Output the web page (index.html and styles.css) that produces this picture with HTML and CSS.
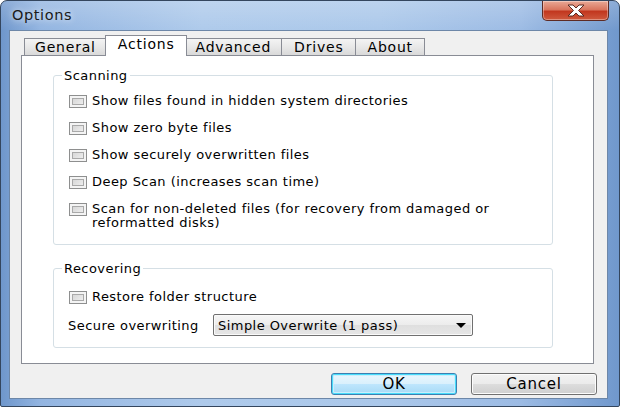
FILE: index.html
```html
<!DOCTYPE html>
<html>
<head>
<meta charset="utf-8">
<link rel="stylesheet" href="styles.css">
</head>
<body>
<div class="window">
  <div class="titlebar">
    <span class="title">Options</span>
    <div class="close">
      <svg width="24" height="13" viewBox="0 0 24 13">
        <path d="M4 1 L9 1 L12 4 L15 1 L20 1 L14.5 6.5 L20 12 L15 12 L12 9 L9 12 L4 12 L9.5 6.5 Z" fill="#fff" stroke="#5a2a22" stroke-width="1" stroke-linejoin="round"/>
      </svg>
    </div>
  </div>
  <div class="client">
    <div class="tabs">
      <div class="tab">General</div>
      <div class="tab tab-active">Actions</div>
      <div class="tab">Advanced</div>
      <div class="tab tab-wide">Drives</div>
      <div class="tab tab-wide">About</div>
    </div>
    <div class="panel">
      <fieldset class="group group-scan">
        <legend>Scanning</legend>
        <div class="group-body">
          <div class="row"><span class="check"></span><span class="label">Show files found in hidden system directories</span></div>
          <div class="row"><span class="check"></span><span class="label">Show zero byte files</span></div>
          <div class="row"><span class="check"></span><span class="label">Show securely overwritten files</span></div>
          <div class="row"><span class="check"></span><span class="label">Deep Scan (increases scan time)</span></div>
          <div class="row"><span class="check"></span><span class="label">Scan for non-deleted files (for recovery from damaged or<br>reformatted disks)</span></div>
        </div>
      </fieldset>
      <fieldset class="group group-recover">
        <legend>Recovering</legend>
        <div class="group-body">
          <div class="row"><span class="check"></span><span class="label">Restore folder structure</span></div>
          <div class="field">
            <span class="field-label">Secure overwriting</span>
            <div class="select">
              <span>Simple Overwrite (1 pass)</span>
              <span class="arrow"></span>
            </div>
          </div>
        </div>
      </fieldset>
    </div>
    <div class="buttons">
      <div class="btn btn-default">OK</div>
      <div class="btn">Cancel</div>
    </div>
  </div>
</div>
</body>
</html>
```
FILE: styles.css
```css
html, body {
  margin: 0;
  padding: 0;
  background: #ffffff;
}
body {
  font-family: "DejaVu Sans", Verdana, sans-serif;
  font-size: 13px;
  letter-spacing: 0.45px;
  color: #000;
}
.window {
  width: 620px;
  height: 407px;
  box-sizing: border-box;
  border: 1px solid #34465e;
  border-radius: 7px 7px 2px 2px;
  background:
    linear-gradient(180deg, rgba(255,255,255,0.2) 0px, rgba(255,255,255,0) 30px),
    linear-gradient(90deg, #6f97cc 0px, #93b5e1 40px, #aecaeb 200px, #abc8ea 380px, #9cbbe4 520px, #6f97cc 620px);
  padding: 0 11px 7px 8px;
  display: flex;
  flex-direction: column;
}
.titlebar {
  height: 29px;
  display: flex;
  align-items: flex-start;
  justify-content: space-between;
}
.title {
  font-size: 14.5px;
  letter-spacing: 0.6px;
  color: #1a1a1a;
  margin: 6px 0 0 3px;
  text-shadow: 0 0 6px rgba(255,255,255,0.9);
}
.close {
  width: 67px;
  height: 20px;
  margin-right: -1px;
  box-sizing: border-box;
  border: 1px solid #5e2b24;
  border-top: none;
  border-radius: 0 0 5px 5px;
  background: linear-gradient(180deg, #e9a996 0%, #d9765f 45%, #c2371f 55%, #cf5a3e 100%);
  box-shadow: inset 0 0 0 1px rgba(255,255,255,0.35);
  display: flex;
  align-items: center;
  justify-content: center;
}
.client {
  flex: 1;
  border: 1px solid #6d87a8;
  background: #f0f0f0;
  display: flex;
  flex-direction: column;
}
.tabs {
  display: flex;
  align-items: flex-end;
  padding: 4px 0 0 14px;
  height: 20px;
}
.tab {
  height: 17px;
  box-sizing: border-box;
  border: 1px solid #898c95;
  border-bottom: none;
  margin-right: -1px;
  padding: 0 10px;
  background: linear-gradient(180deg, #f4f4f4 0%, #e8e8e8 50%, #d9d9d9 100%);
  display: flex;
  align-items: center;
  font-size: 14px;
  letter-spacing: 0.8px;
  line-height: 15px;
}
.tab:first-child {
  padding: 0 11px 0 10px;
}
.tab-wide {
  padding: 0 11px 0 12px;
}
.tab-active {
  height: 21px;
  margin: 0 -2px -1px -2px;
  padding: 0 11px 3px 12px;
  background: #ffffff;
  position: relative;
  z-index: 1;
}
.panel {
  height: 309px;
  box-sizing: border-box;
  margin: 0 13px 0 11px;
  border: 1px solid #898c95;
  background: #ffffff;
  padding: 12px 40px 0 31px;
}
.group {
  margin: 0;
  padding: 0;
  border: 1px solid #d5dfe5;
  border-radius: 3px;
  min-width: 0;
}
.group legend {
  margin-left: 8px;
  padding: 0 2px;
  line-height: 15px;
}
.group-body {
  padding: 11px 10px 0 15px;
}
.group-scan .group-body {
  padding-bottom: 14px;
}
.group-recover {
  margin-top: 16px;
}
.group-recover .group-body {
  padding-top: 14px;
  padding-bottom: 11px;
}
.row {
  display: flex;
  align-items: flex-start;
  line-height: 14px;
}
.row + .row {
  margin-top: 13px;
}
.check {
  width: 18px;
  height: 13px;
  box-sizing: border-box;
  flex: none;
  margin: 1px 5px 0 0;
  border: 1px solid #8e8f8f;
  background: linear-gradient(135deg, #cfcfcf 0%, #e6e6e6 60%, #f6f6f6 100%);
  box-shadow: inset 0 0 0 2px #f4f4f4, inset 0 0 0 3px #a9a9a9;
}
.field {
  display: flex;
  align-items: center;
  margin-top: 10px;
  margin-left: -1px;
}
.field-label {
  width: 145px;
}
.select {
  width: 260px;
  height: 22px;
  box-sizing: border-box;
  border: 1px solid #707070;
  border-radius: 2px;
  background: linear-gradient(180deg, #f6f6f6 0%, #ececec 50%, #dfdfdf 51%, #e6e6e6 100%);
  box-shadow: inset 0 0 0 1px #fafafa;
  display: flex;
  align-items: center;
  justify-content: space-between;
  padding: 0 6px 0 4px;
}
.arrow {
  width: 0;
  height: 0;
  border-left: 5px solid transparent;
  border-right: 5px solid transparent;
  border-top: 5px solid #000;
}
.buttons {
  display: flex;
  justify-content: flex-end;
  gap: 14px;
  padding: 9px 10px 0 0;
}
.btn {
  width: 126px;
  height: 22px;
  box-sizing: border-box;
  border: 1px solid #707070;
  border-radius: 3px;
  background: linear-gradient(180deg, #f2f2f2 0%, #ebebeb 50%, #dddddd 51%, #cfcfcf 100%);
  box-shadow: inset 0 0 0 1px #fcfcfc;
  display: flex;
  align-items: center;
  justify-content: center;
  font-size: 15px;
  letter-spacing: 0.8px;
}
.btn-default {
  border-color: #3c7fb1;
  background: linear-gradient(180deg, #eaf6fd 0%, #d9f0fc 50%, #bee6fd 51%, #a7d9f5 100%);
  box-shadow: inset 0 0 0 1px #48dcfb, inset 0 0 0 2px #c9eefc;
}
```
